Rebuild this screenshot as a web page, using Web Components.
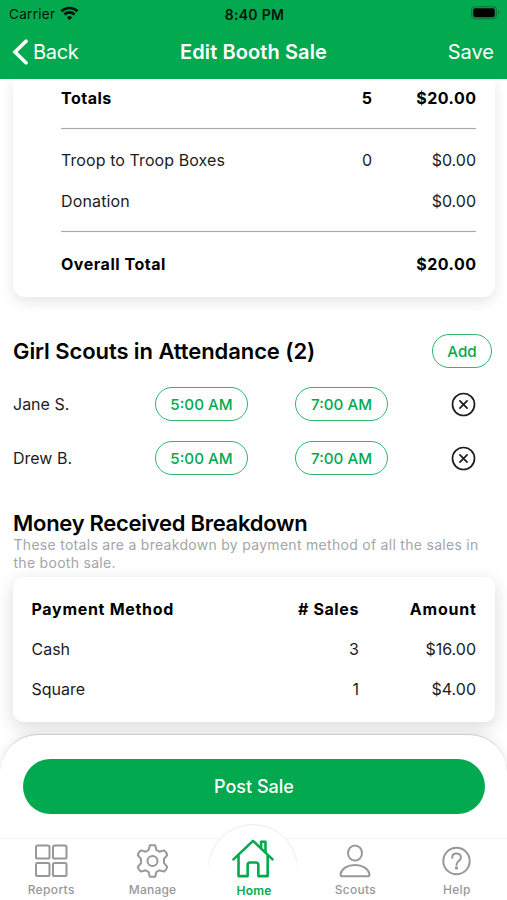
<!DOCTYPE html>
<html lang="en">
<head>
<meta charset="utf-8">
<title>Edit Booth Sale</title>
<style>
  html, body { margin: 0; height: 100%; }
  body { font-family: Inter, "Liberation Sans", sans-serif; background: #fff; color: #1b1c1e; --green: #02a94e; --grey: #98989b; overflow: hidden; }
</style>
</head>
<body>
<booth-app>
  <status-bar slot="top"></status-bar>
  <nav-bar slot="top"><span slot="back">Back</span><span slot="title">Edit Booth Sale</span><span slot="action">Save</span></nav-bar>

  <sheet-card style="--pad: 0 18.5px 12px 48px; --shadow: 0 5px 14px rgba(0,0,0,.1)">
    <table-row strong style="--h:38px;--gap:104px;--ls:.5px;--ls2:.5px"><span>Totals</span><span slot="qty">5</span><span slot="amount">$20.00</span></table-row>
    <card-rule style="--top:11px;--bottom:10px"></card-rule>
    <table-row style="--h:41px;--gap:104px;--ls:.08px"><span>Troop to Troop Boxes</span><span slot="qty">0</span><span slot="amount">$0.00</span></table-row>
    <table-row style="--h:41px;--gap:104px;--ls:.15px"><span>Donation</span><span slot="amount">$0.00</span></table-row>
    <card-rule style="--top:10px;--bottom:11px"></card-rule>
    <table-row strong style="--h:42px;--gap:104px;--ls:.53px;--ls2:.5px"><span>Overall Total</span><span slot="amount">$20.00</span></table-row>
  </sheet-card>

  <section-head style="--mt:37px;--ls:-.08px">Girl Scouts in Attendance (2)<pill-button slot="end" style="--w:60px;--h:34px">Add</pill-button></section-head>
  <scout-row style="--mt:9px"><span slot="name">Jane S.</span><pill-button slot="start">5:00 AM</pill-button><pill-button slot="end">7:00 AM</pill-button></scout-row>
  <scout-row><span slot="name">Drew B.</span><pill-button slot="start">5:00 AM</pill-button><pill-button slot="end">7:00 AM</pill-button></scout-row>

  <section-head style="--mt:21px;--ls:-.28px">Money Received Breakdown</section-head>
  <help-note>These totals are a breakdown by payment method of all the sales in the booth sale.</help-note>
  <sheet-card style="--pad: 12px 18.5px 13px 18.5px; --shadow: 0 5px 18px rgba(0,0,0,.15); --mt:5px; --r:10px">
    <table-row strong style="--h:40px;--gap:117px;--ls:.7px;--ls1:.6px;--ls2:.8px"><span>Payment Method</span><span slot="qty"># Sales</span><span slot="amount">Amount</span></table-row>
    <table-row style="--h:40px;--gap:117px"><span>Cash</span><span slot="qty">3</span><span slot="amount">$16.00</span></table-row>
    <table-row style="--h:40px;--gap:117px"><span>Square</span><span slot="qty">1</span><span slot="amount">$4.00</span></table-row>
  </sheet-card>

  <action-panel slot="bottom">Post Sale</action-panel>
  <tab-bar slot="bottom">
    <tab-item icon="grid" style="--ls:.35px">Reports</tab-item>
    <tab-item icon="gear" style="--ls:.2px">Manage</tab-item>
    <tab-item icon="home" active style="--ls:.2px">Home</tab-item>
    <tab-item icon="person" style="--ls:.3px">Scouts</tab-item>
    <tab-item icon="help" style="--ls:.3px">Help</tab-item>
  </tab-bar>
</booth-app>

<script>
const define = (name, html) => customElements.define(name, class extends HTMLElement {
  constructor() {
    super();
    this.attachShadow({ mode: 'open' }).innerHTML = typeof html === 'function' ? html(this) : html;
  }
});

define('booth-app', `
<style>
  :host { display: flex; flex-direction: column; height: 900px; }
  header, footer { flex: none; }
  header { position: relative; z-index: 2; background: var(--green); height: 79px; }
  main { height: 655px; flex: none; }
  footer { position: relative; z-index: 1; }
</style>
<header><slot name="top"></slot></header>
<main><slot></slot></main>
<footer><slot name="bottom"></slot></footer>`);

define('status-bar', `
<style>
  :host { display: grid; grid-template-columns: 1fr auto 1fr; align-items: center; height: 28px; padding: 0 7px 0 9px; color: #06160c; }
  .net { display: flex; align-items: center; gap: 5px; font-size: 13.5px; letter-spacing: .3px; }
  .time { font-size: 14px; font-weight: 600; letter-spacing: .3px; }
  .bat { justify-self: end; }
  svg { display: block; margin-top: -2px; }
</style>
<div class="net"><span>Carrier</span>
<svg width="19" height="15" viewBox="0 0 19 15" fill="none" stroke="#06160c" stroke-width="2.7">
  <path d="M1.4 5.3a11.6 11.6 0 0 1 16.2 0"/><path d="M4.4 8.5a7.3 7.3 0 0 1 10.2 0"/><path d="M9.5 14.2l-2.6-2.8a3.6 3.6 0 0 1 5.2 0z" fill="#06160c" stroke="none"/></svg></div>
<div class="time">8:40 PM</div>
<svg class="bat" width="29" height="14" viewBox="0 0 29 14"><rect x=".7" y=".8" width="24.6" height="12" rx="3.4" fill="none" stroke="#04723a" stroke-width="1.1"/><rect x="2.2" y="2.3" width="21.6" height="9" rx="2" fill="#000"/><path d="M27 4.8c1.5.6 1.5 3.4 0 4z" fill="#04723a"/></svg>`);

define('nav-bar', `
<style>
  :host { display: grid; grid-template-columns: 1fr auto 1fr; align-items: center; height: 48px; padding: 0 13px 0 12px; color: #fff; font-size: 20px; }
  .back { display: flex; align-items: center; gap: 4px; letter-spacing: -.3px; }
  .title { font-weight: 600; letter-spacing: .1px; padding-left: 1px; }
  .act { justify-self: end; }
  svg { display: block; }
</style>
<div class="back"><svg width="17" height="26" viewBox="0 0 17 26" fill="none" stroke="#fff" stroke-width="3.6"><path d="M14 2.200 3 13l11 10.800" stroke-linecap="round" stroke-linejoin="miter"/></svg><slot name="back"></slot></div>
<div class="title"><slot name="title"></slot></div>
<div class="act"><slot name="action"></slot></div>`);

define('sheet-card', `
<style>
  :host { display: block; box-sizing: border-box; margin: var(--mt, 0) 12.5px 0 13px; padding: var(--pad); background: #fff;
    border-radius: var(--r, 12px); box-shadow: var(--shadow); }
  :host(:first-of-type) { border-top-left-radius: 0; border-top-right-radius: 0; }
</style><slot></slot>`);

define('table-row', `
<style>
  :host { display: grid; grid-template-columns: 1fr auto var(--gap); align-items: center; height: var(--h); font-size: 16px; line-height: 20px; }
  :host([strong]) { font-weight: 700; color: #000; }
  .n { letter-spacing: var(--ls, 0); }
  .q { letter-spacing: var(--ls1, 0); }
  .a { text-align: right; letter-spacing: var(--ls2, 0); margin-right: calc(0px - var(--ls2, 0px)); }
</style>
<div class="n"><slot></slot></div><div class="q"><slot name="qty"></slot></div><div class="a"><slot name="amount"></slot></div>`);

define('card-rule', `
<style>:host { display: block; height: 1px; margin: var(--top) 0 var(--bottom); background: #a8a8aa; box-shadow: 0 0 1px rgba(0,0,0,.3); }</style>`);

define('section-head', `
<style>
  :host { display: flex; align-items: center; justify-content: space-between; height: 34px; margin: var(--mt) 15px 0 13px;
    font-size: 22px; font-weight: 600; color: #000; letter-spacing: var(--ls, 0); }
</style><span><slot></slot></span><slot name="end"></slot>`);

define('pill-button', `
<style>
  :host { display: inline-flex; box-sizing: border-box; align-items: center; justify-content: center; width: var(--w, 93px); height: var(--h, 34px);
    border: 1.5px solid #2fb56d; border-radius: 17px; color: var(--green); font-size: 15.2px; font-weight: 500; letter-spacing: 0; }
</style><slot></slot>`);

define('scout-row', `
<style>
  :host { display: grid; grid-template-columns: 142px 140px 1fr auto; align-items: center; height: 54px; margin: var(--mt, 0) 31px 0 13px; font-size: 16px; }
  svg { display: block; }
</style>
<slot name="name"></slot><slot name="start"></slot><slot name="end"></slot>
<svg width="25" height="25" viewBox="0 0 25 25" fill="none" stroke="#1d1d1f" stroke-width="1.7" stroke-linecap="round"><circle cx="12.5" cy="12.5" r="11"/><path d="M8.9 8.9l7.2 7.2M16.1 8.900l-7.200 7.200"/></svg>`);

define('help-note', `
<style>:host { display: block; margin: -4px 13px 0 13.500px; font-size: 14px; line-height: 18px; letter-spacing: .29px; color: #a4a5a9; }</style><slot></slot>`);

define('action-panel', `
<style>
  :host { display: block; box-sizing: border-box; height: 104px; padding: 24px 22px 0 23px; background: #fff; border-top: 1px solid #cbcbcb;
    border-radius: 38px 38px 0 0; box-shadow: 0 -2px 10px rgba(0,0,0,.08); }
  button { display: block; width: 100%; height: 55px; padding: 0; border: 0; border-radius: 28px; background: var(--green); color: #fff;
    font: 500 18px Inter, sans-serif; }
</style><button><slot></slot></button>`);

define('tab-bar', `
<style>
  :host { display: grid; grid-template-columns: repeat(5, 1fr); box-sizing: border-box; height: 62px; border-top: 1px solid #f1f1f2; background: #fff; }
</style><slot></slot>`);

const ICONS = {
  grid: '<rect x="3" y="2.5" width="13.5" height="13" rx="1.6"/><rect x="20" y="2.5" width="13.5" height="13" rx="1.6"/><rect x="3" y="20" width="13.5" height="13" rx="1.6"/><rect x="20" y="20" width="13.5" height="13" rx="1.6"/>',
  gear: '<circle cx="18.500" cy="18" r="5"/><path d="M15.8 2.3h5.4l1.2 4.7 2.900 1.700 4.700-1.300q2.600 1.600 3.200 4.700l-3.200 3.800v4.200l3.200 3.800q-.6 3.100-3.200 4.700l-4.700-1.300-2.900 1.700-1.200 4.700h-5.400l-1.200-4.700-2.900-1.700-4.700 1.300q-2.600-1.600-3.200-4.700l3.200-3.800v-4.200l-3.200-3.800q.6-3.100 3.200-4.700l4.700 1.300L14.600 7z"/>',
  person: '<ellipse cx="18" cy="10" rx="7" ry="7.6"/><path d="M5.500 33.300h25c1.600 0 2.100-.7 1.900-2.200-.8-5.200-6.600-9.100-14.400-9.100S4.400 25.900 3.600 31.100c-.2 1.500.3 2.200 1.900 2.200z"/>',
  help: '<circle cx="18.5" cy="18" r="13.2"/><path d="M14.2 14.700c0-2.500 1.800-4.200 4.300-4.200s4.400 1.600 4.400 4c0 3.400-4.400 3.500-4.400 6.900v.6"/><circle cx="18.500" cy="25" r=".7" fill="currentColor"/>'
};
const homeIcon = `<svg class="home" width="44" height="40" viewBox="0 0 46 42" fill="none" stroke="currentColor" stroke-width="2.7" stroke-linejoin="round" stroke-linecap="round"><path d="M2.500 22.500 23 3l20.500 19.500"/><path d="M7.800 19v21h9.600V28.200q0-2.500 2.500-2.500h6.200q2.500 0 2.500 2.500V40h9.800V19"/><path d="M31.500 10.500V4h4.600v10.500"/></svg>`;

define('tab-item', el => {
  const active = el.hasAttribute('active');
  const icon = active ? homeIcon : `<svg width="36" height="36" viewBox="0 0 36 36" fill="none" stroke="currentColor" stroke-width="2" stroke-linejoin="round" stroke-linecap="round">${ICONS[el.getAttribute('icon')]}</svg>`;
  return `
<style>
  :host { display: flex; flex-direction: column; align-items: center; position: relative; color: var(--grey); font-size: 12px; font-weight: 500; line-height: 16px; padding-top: 4px; letter-spacing: var(--ls, 0); }
  :host([active]) { color: var(--green); font-weight: 600; padding-top: 0; }
  svg { display: block; margin-bottom: 3px; position: relative; }
  svg.home { margin: -1px 0 4.5px; }
  .halo { position: absolute; top: -15px; left: 50%; width: 90px; height: 76px; transform: translateX(-50%); overflow: hidden;
    -webkit-mask: linear-gradient(#000 32px, transparent 46px); }
  .halo i { display: block; box-sizing: border-box; width: 90px; height: 90px; border: 1px solid #ebebec; border-radius: 50%; background: #fff; }
  span { position: relative; padding-left: 1px; }
</style>${active ? '<div class="halo"><i></i></div>' : ''}${icon}<span><slot></slot></span>`;
});
</script>
</body>
</html>
